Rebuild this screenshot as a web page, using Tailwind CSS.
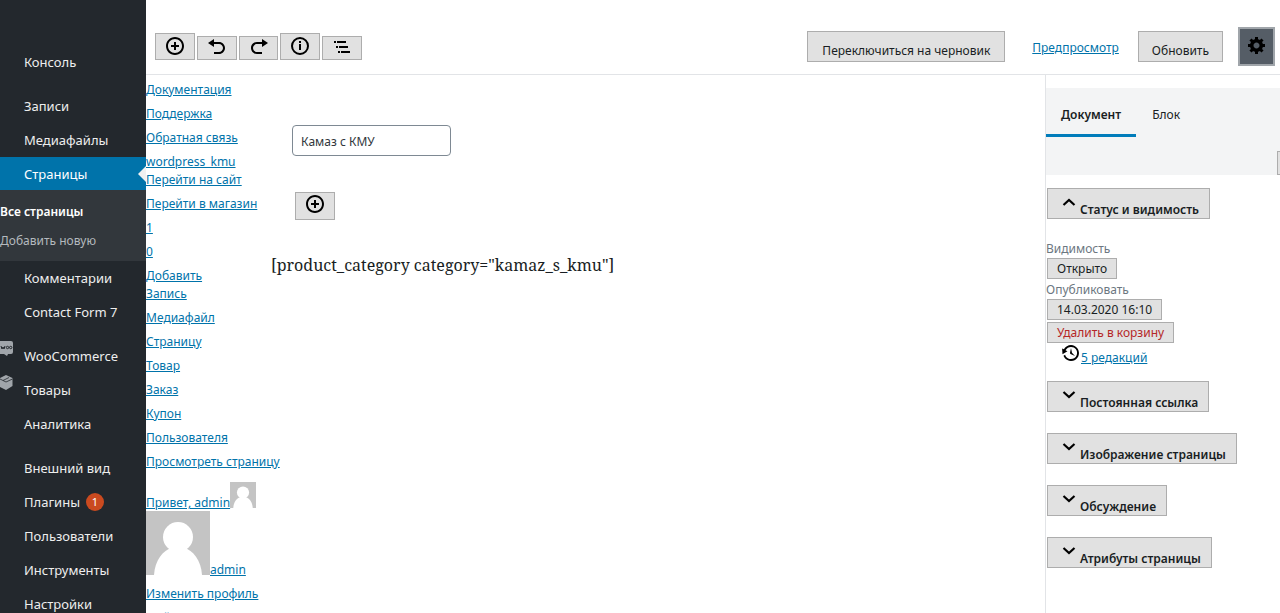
<!DOCTYPE html>
<html lang="ru">
<head>
<meta charset="utf-8">
<title>Камаз с КМУ</title>
<script src="https://cdn.jsdelivr.net/npm/@tailwindcss/browser@4"></script>
</head>
<body class="flex h-screen overflow-hidden bg-white font-['Noto_Sans',sans-serif] text-xs text-[#191e23]">

<nav class="w-[146px] shrink-0 bg-[#23282d] pt-[45px] text-[13px] leading-[34px] whitespace-nowrap text-[#eee]">
  <ul>
    <li><a href="#" class="block pl-6">Консоль</a></li>
    <li class="pt-[10px]"><a href="#" class="block pl-6">Записи</a></li>
    <li><a href="#" class="block pl-6">Медиафайлы</a></li>
    <li>
      <a href="#" class="relative block h-[33px] bg-[#0073aa] pl-6 text-white">Страницы
        <span class="absolute top-[9px] right-0 border-y-8 border-r-8 border-y-transparent border-r-[#f1f1f1]"></span>
      </a>
      <ul class="bg-[#32373c] pt-[7px] pb-[6px] text-xs leading-[29px]">
        <li><a href="#" class="font-semibold text-white">Все страницы</a></li>
        <li><a href="#" class="text-[#b4b9be]">Добавить новую</a></li>
      </ul>
    </li>
    <li><a href="#" class="block pl-6">Комментарии</a></li>
    <li><a href="#" class="block pl-6">Contact Form 7</a></li>
    <li class="pt-[10px]">
      <a href="#" class="flex"><svg class="h-5 w-6 shrink-0" viewBox="0 0 24 20"><path fill="#a0a5aa" d="M0 2h11a2 2 0 0 1 2 2v9a2 2 0 0 1-2 2H8l-1 2-3-2H0z"/><path fill="none" stroke="#23282d" d="M1 7l1 3 1-2 1 2 1-3"/><circle cx="7.500" cy="8.500" r="1.200" fill="none" stroke="#23282d"/><circle cx="10.700" cy="8.500" r="1.200" fill="none" stroke="#23282d"/></svg>WooCommerce</a>
    </li>
    <li>
      <a href="#" class="flex"><svg class="h-5 w-6 shrink-0" viewBox="0 0 24 20"><path fill="#a0a5aa" d="M6 2l6.500 3v8L6 17l-6-3V5z"/><path fill="none" stroke="#23282d" stroke-width=".8" d="M0 6l6 3 6.500-3M3 7.500l6-3"/></svg>Товары</a>
    </li>
    <li><a href="#" class="block pl-6">Аналитика</a></li>
    <li class="pt-[10px]"><a href="#" class="block pl-6">Внешний вид</a></li>
    <li><a href="#" class="flex items-center gap-[6px] pl-6">Плагины<span class="size-[18px] rounded-full bg-[#ca4a1f] text-center text-[11px] leading-[18px] text-white">1</span></a></li>
    <li><a href="#" class="block pl-6">Пользователи</a></li>
    <li><a href="#" class="block pl-6">Инструменты</a></li>
    <li><a href="#" class="block pl-6">Настройки</a></li>
  </ul>
</nav>

<div class="flex min-w-0 flex-1 flex-col">
  <header class="flex h-[75px] shrink-0 items-center border-b border-[#e2e4e7] pr-[5px] pl-[9px]">
    <div class="flex flex-1 items-end gap-[2px] pt-[18px]">
      <button aria-label="Добавить блок" class="flex h-[27px] w-10 justify-center border border-[#adadad] bg-[#e1e1e1] pt-[2px]"><svg class="size-5" viewBox="0 0 20 20"><path d="M10 1c-5 0-9 4-9 9s4 9 9 9 9-4 9-9-4-9-9-9zm0 16c-3.900 0-7-3.100-7-7s3.100-7 7-7 7 3.100 7 7-3.100 7-7 7zM11 6H9v3H6v2h3v3h2v-3h3V9h-3z"/></svg></button>
      <button aria-label="Отменить" class="flex h-6 w-10 justify-center border border-[#adadad] bg-[#e1e1e1]"><svg class="size-5" viewBox="0 0 20 20"><path d="M12 5H7V2L1 6l6 4V7h5c2.200 0 4 1.800 4 4s-1.800 4-4 4H7v2h5c3.300 0 6-2.700 6-6s-2.700-6-6-6z"/></svg></button>
      <button aria-label="Повторить" class="flex h-6 w-[39px] justify-center border border-[#adadad] bg-[#e1e1e1]"><svg class="size-5" viewBox="0 0 20 20"><path d="M8 5h5V2l6 4-6 4V7H8c-2.200 0-4 1.800-4 4s1.800 4 4 4h5v2H8c-3.300 0-6-2.700-6-6s2.700-6 6-6z"/></svg></button>
      <button aria-label="Структура содержимого" class="flex h-[27px] w-10 justify-center border border-[#adadad] bg-[#e1e1e1] pt-[2px]"><svg class="size-5" viewBox="0 0 20 20"><path d="M10 1a9 9 0 1 0 0 18 9 9 0 0 0 0-18zm0 16a7 7 0 1 1 0-14 7 7 0 0 1 0 14zM9 5h2v2H9zM9 8h2v6H9z"/></svg></button>
      <button aria-label="Навигация по блокам" class="flex h-6 w-10 justify-center border border-[#adadad] bg-[#e1e1e1]"><svg class="size-5" viewBox="0 0 20 20"><path d="M2 4h2v2H2zM5 4h9v2H5zM4 9h2v2H4zM7 9h9v2H7zM6 14h2v2H6zM9 14h9v2H9z"/></svg></button>
    </div>
    <div class="flex items-center pt-[19px] whitespace-nowrap">
      <button class="h-[31px] border border-[#adadad] bg-[#e1e1e1] px-[14px] pt-2">Переключиться на черновик</button>
      <a href="#" class="ml-[27px] pt-[2px] text-[#0073aa] underline">Предпросмотр</a>
      <button class="ml-[19px] h-[31px] border border-[#adadad] bg-[#e1e1e1] px-[13px] pt-2">Обновить</button>
      <button aria-label="Настройки" class="ml-[15px] flex h-[39px] w-[37px] justify-center border-2 border-[#a0a5aa] bg-[#555d66] pt-[6px]"><svg class="size-5" viewBox="0 0 20 20"><path d="M18 12h-2.180c-.17.7-.44 1.350-.81 1.930l1.540 1.540-2.100 2.100-1.540-1.540c-.58.36-1.230.63-1.910.79V19H8v-2.180c-.68-.16-1.330-.43-1.910-.79l-1.540 1.540-2.120-2.120 1.540-1.540c-.36-.58-.63-1.230-.79-1.910H1V9.030h2.170c.16-.7.44-1.350.8-1.940L2.430 5.550l2.100-2.100 1.540 1.540c.58-.37 1.240-.64 1.930-.81V2h3v2.180c.68.16 1.330.43 1.910.79l1.540-1.540 2.120 2.120-1.540 1.540c.36.59.64 1.240.8 1.940H18V12zm-8.500 1.500c1.660 0 3-1.340 3-3s-1.340-3-3-3-3 1.340-3 3 1.340 3 3 3z"/></svg></button>
    </div>
  </header>

  <div class="flex min-h-0 flex-1">
    <ul class="w-[125px] shrink-0 space-y-[6px] pt-[6px] leading-[18px] whitespace-nowrap text-[#0073aa] underline">
      <li><a href="#">Документация</a></li>
      <li><a href="#">Поддержка</a></li>
      <li><a href="#">Обратная связь</a></li>
      <li><a href="#" class="block">wordpress_kmu</a><a href="#" class="block">Перейти на сайт</a></li>
      <li><a href="#">Перейти в магазин</a></li>
      <li><a href="#">1</a></li>
      <li><a href="#">0</a></li>
      <li><a href="#" class="block">Добавить</a><a href="#" class="block">Запись</a></li>
      <li><a href="#">Медиафайл</a></li>
      <li><a href="#">Страницу</a></li>
      <li><a href="#">Товар</a></li>
      <li><a href="#">Заказ</a></li>
      <li><a href="#">Купон</a></li>
      <li><a href="#">Пользователя</a></li>
      <li><a href="#">Просмотреть страницу</a></li>
      <li class="pt-[5px]">
        <a href="#" class="flex items-end"><span class="-mb-1">Привет, admin</span><svg class="size-[26px]" viewBox="0 0 64 64"><path fill="#c4c4c4" d="M0 0h64v64H0z"/><circle cx="32" cy="26" r="15" fill="#fff"/><path fill="#fff" d="M8 64c1-15 9-25 18-27h12c9 2 17 12 18 27z"/></svg></a>
        <a href="#" class="mt-[3px] flex items-end"><svg class="size-16" viewBox="0 0 64 64"><path fill="#c4c4c4" d="M0 0h64v64H0z"/><circle cx="32" cy="26" r="15" fill="#fff"/><path fill="#fff" d="M8 64c1-15 9-25 18-27h12c9 2 17 12 18 27z"/></svg><span class="-mb-1">admin</span></a>
      </li>
      <li class="pt-1"><a href="#">Изменить профиль</a></li>
      <li><a href="#">Выйти</a></li>
    </ul>

    <main class="flex min-w-0 flex-1 flex-col items-start pt-[50px]">
      <input type="text" aria-label="Заголовок" value="Камаз с КМУ" class="ml-[21px] h-[31px] w-[159px] rounded-[4px] border border-[#7e8993] px-2 pt-[2px] text-xs text-[#32373c]">
      <button aria-label="Добавить блок" class="mt-9 ml-6 flex h-7 w-10 justify-center border border-[#adadad] bg-[#e1e1e1] pt-px"><svg class="size-5" viewBox="0 0 20 20"><path d="M10 1c-5 0-9 4-9 9s4 9 9 9 9-4 9-9-4-9-9-9zm0 16c-3.900 0-7-3.100-7-7s3.100-7 7-7 7 3.100 7 7-3.100 7-7 7zM11 6H9v3H6v2h3v3h2v-3h3V9h-3z"/></svg></button>
      <p class="mt-[31px] font-['Noto_Serif','Liberation_Serif',serif] text-base leading-7">[product_category category="kamaz_s_kmu"]</p>
    </main>

    <aside class="flex w-[235px] shrink-0 flex-col items-start overflow-hidden border-l border-[#e2e4e7] pt-[13px] whitespace-nowrap">
      <div class="flex h-[87px] w-full shrink-0 items-start bg-[#f3f4f5]">
        <button class="h-[49px] border-b-3 border-[#007cba] px-[15px] pt-2 font-semibold">Документ</button>
        <button class="h-[49px] border-b-3 border-transparent px-4 pt-2">Блок</button>
        <button aria-label="Закрыть настройки" class="mt-[63px] ml-[81px] h-6 w-10 shrink-0 border border-[#adadad] bg-[#e1e1e1]"></button>
      </div>
      <button class="mt-[13px] ml-px flex h-[31px] shrink-0 items-end border border-[#adadad] bg-[#e1e1e1] pr-[10px] pl-[10px] font-semibold"><svg class="mb-[6px] size-[22px]" viewBox="0 0 22 22"><path fill="none" stroke="#000" stroke-width="2.200" d="M5.500 15l5.500-5 5.500 5"/></svg>Статус и видимость</button>
      <div class="mt-[21px] leading-[18px] text-[#6c7781]">Видимость</div>
      <button class="ml-px h-[21px] shrink-0 border border-[#adadad] bg-[#e1e1e1] px-[9px] pt-px">Открыто</button>
      <div class="pt-[2px] leading-[18px] text-[#6c7781]">Опубликовать</div>
      <button class="ml-px h-[21px] shrink-0 border border-[#adadad] bg-[#e1e1e1] px-[9px]">14.03.2020 16:10</button>
      <button class="mt-[2px] ml-px h-[21px] shrink-0 border border-[#adadad] bg-[#e1e1e1] px-[9px] text-[#b52727]">Удалить в корзину</button>
      <a href="#" class="ml-[15px] flex items-end text-[#0073aa] underline"><svg class="mb-[3px] size-5" viewBox="0 0 20 20"><path fill="#000" d="M13.650 2.880c3.930 2.010 5.480 6.840 3.470 10.770s-6.830 5.480-10.770 3.470c-1.870-.96-3.200-2.560-3.860-4.400l1.640-1.030c.45 1.570 1.520 2.950 3.080 3.760 3.010 1.540 6.690.35 8.230-2.660 1.550-3.010.36-6.690-2.650-8.240C9.780 3.010 6.100 4.200 4.560 7.210l1.880.97-4.950 3.080-.39-5.820 1.780.91C4.900 2.400 9.750.89 13.650 2.880zm-4.360 7.830C9.110 10.530 9 10.280 9 10c0-.07.03-.12.04-.19h-.01L10 5l.97 4.810L14 13l-4.500-2.120.02-.02c-.08-.04-.16-.09-.23-.15z"/></svg>5 редакций</a>
      <div class="mt-[15px] ml-px flex flex-col items-start gap-[21px] font-semibold">
        <button class="flex h-[31px] items-end border border-[#adadad] bg-[#e1e1e1] pr-[10px] pl-[10px]"><svg class="mb-[6px] size-[22px]" viewBox="0 0 22 22"><path fill="none" stroke="#000" stroke-width="2.200" d="M5.500 9l5.500 5 5.500-5"/></svg>Постоянная ссылка</button>
        <button class="flex h-[31px] items-end border border-[#adadad] bg-[#e1e1e1] pr-[10px] pl-[10px]"><svg class="mb-[6px] size-[22px]" viewBox="0 0 22 22"><path fill="none" stroke="#000" stroke-width="2.200" d="M5.500 9l5.500 5 5.500-5"/></svg>Изображение страницы</button>
        <button class="flex h-[31px] items-end border border-[#adadad] bg-[#e1e1e1] pr-[10px] pl-[10px]"><svg class="mb-[6px] size-[22px]" viewBox="0 0 22 22"><path fill="none" stroke="#000" stroke-width="2.200" d="M5.500 9l5.500 5 5.500-5"/></svg>Обсуждение</button>
        <button class="flex h-[31px] items-end border border-[#adadad] bg-[#e1e1e1] pr-[10px] pl-[10px]"><svg class="mb-[6px] size-[22px]" viewBox="0 0 22 22"><path fill="none" stroke="#000" stroke-width="2.200" d="M5.500 9l5.500 5 5.500-5"/></svg>Атрибуты страницы</button>
      </div>
    </aside>
  </div>
</div>
</body>
</html>
